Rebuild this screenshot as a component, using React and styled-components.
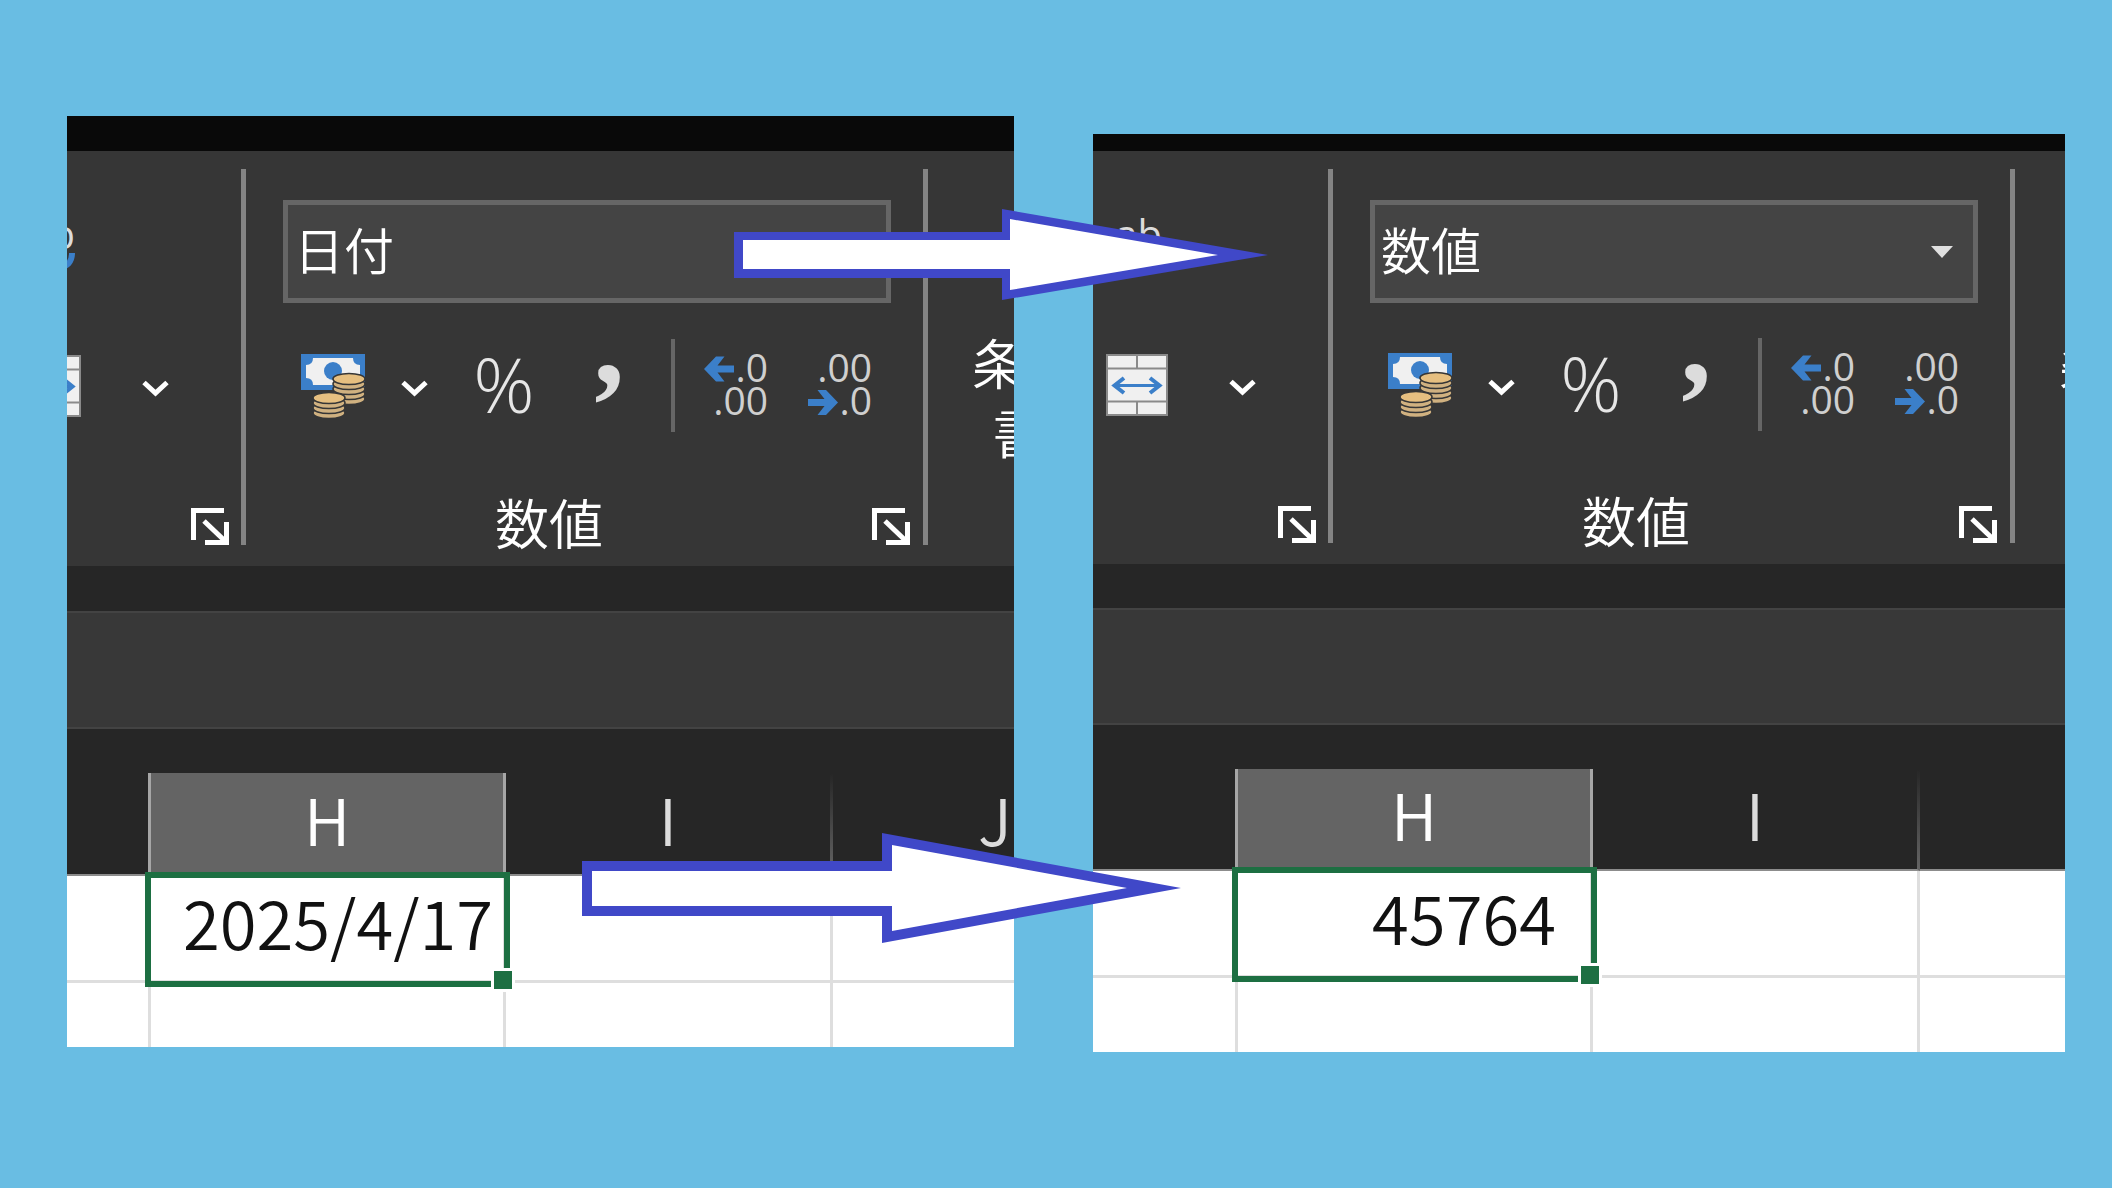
import React from 'react'
import styled, { createGlobalStyle } from 'styled-components'

const GlobalStyle = createGlobalStyle`
  * {
    box-sizing: border-box;
  }

  body {
    margin: 0;
    min-height: 100vh;
    background: #69bde3;
    font-family: 'Noto Sans CJK JP', 'Noto Sans', sans-serif;
    font-weight: 350;
  }
`

const Page = styled.main`
  display: grid;
  grid-template-columns: minmax(0, 947fr) minmax(0, 972fr);
  align-items: start;
  gap: 79px;
  min-height: 100vh;
  padding: 116px 47px 0 67px;
  overflow: hidden;
`

const Slot = styled.section`
  position: relative;
  z-index: ${props => (props.$raised ? 1 : 0)};
  margin-top: ${props => props.$drop}px;
`

const Window = styled.div`
  overflow: hidden;
  background: #262626;
`

const TitleStrip = styled.div`
  height: ${props => props.$height}px;
  background: #090909;
`

const Ribbon = styled.div`
  display: flex;
  height: ${props => props.$height}px;
  background: #363636;
  color: #fff;
`

const Divider = styled.div`
  flex: none;
  width: 5px;
  margin: 18px 0 21px;
  background: #848484;
`

const AlignGroup = styled.div`
  display: flex;
  flex: none;
  flex-direction: column;
  align-items: flex-end;
  justify-content: space-between;
  width: ${props => props.$width}px;
  padding: 49px 12px 14px 0;
`

const NumberGroup = styled.div`
  display: flex;
  flex: none;
  flex-direction: column;
  justify-content: space-between;
  width: 677px;
  padding: 49px 13px 14px 0;
`

const StyleGroup = styled.div`
  display: flex;
  flex: 1;
  min-width: 0;
  padding: 176px 0 0 44px;
  overflow: hidden;
`

const StyleButton = styled.button`
  display: flex;
  flex: none;
  flex-direction: column;
  align-items: center;
  padding: 0;
  border: 0;
  background: none;
  color: #fff;
  font: inherit;
  font-size: 54px;
  line-height: 69px;
  white-space: nowrap;

  span {
    display: flex;
    align-items: center;
    gap: 40px;
  }
`

const ToolButton = styled.button`
  display: flex;
  flex: none;
  align-items: center;
  justify-content: center;
  padding: 0;
  border: 0;
  background: none;
  color: #dcdcdc;

  svg {
    display: block;
  }
`

const LauncherButton = styled(ToolButton)`
  padding-bottom: 7px;
`

const WrapRow = styled.div`
  height: 103px;
  padding: 14px 153px 0 0;
`

const MergeRow = styled.div`
  display: flex;
  align-items: center;
  gap: 61px;
  height: 121px;
  padding: 0 60px 30px 0;
`

const FormatBox = styled.label`
  position: relative;
  display: block;
  margin: 0 19px 0 37px;

  svg {
    position: absolute;
    top: 46px;
    right: 25px;
    pointer-events: none;
  }
`

const FormatSelect = styled.select`
  display: block;
  width: 100%;
  height: 103px;
  padding: 0 6px 8px;
  appearance: none;
  border: 5px solid #666;
  border-radius: 0;
  background: #444;
  color: #fff;
  font: inherit;
  font-size: 50px;
`

const Tools = styled.div`
  display: flex;
  align-items: center;
  height: 121px;
  padding: 0 38px 30px 55px;
`

const MoneyTools = styled.div`
  display: flex;
  align-items: center;
  gap: 36px;
  margin-right: 45px;
`

const SignTools = styled.div`
  display: flex;
  align-items: center;
  gap: 61px;
  margin-right: 49px;
`

const DecimalTools = styled.div`
  display: flex;
  gap: 40px;
  margin-left: 29px;
`

const ToolDivider = styled.div`
  width: 5px;
  height: 93px;
  background: #666;
`

const Footer = styled.div`
  display: flex;
  align-items: flex-end;
  gap: 20px;
  height: 54px;
`

const GroupName = styled.span`
  flex: 1;
  padding-bottom: 3px;
  font-size: 54px;
  line-height: 54px;
  text-align: center;
`

const Gap = styled.div`
  height: ${props => props.$height}px;
`

const FormulaBar = styled.div`
  height: ${props => props.$height}px;
  border: solid #434343;
  border-width: 2px 0;
  background: #383838;
`

const Sheet = styled.table`
  width: 0;
  table-layout: fixed;
  border-spacing: 0;
  background: #fff;
`

const HeadCell = styled.th`
  height: ${props => props.$height}px;
  padding: 0 0 12px;
  border-right: 3px solid ${props => (props.$edge ? '#a6a6a6' : 'transparent')};
  border-bottom: 2px solid #8c8c8c;
  background: ${props => (props.$active ? '#646464' : 'linear-gradient(#262626, #666) right / 3px 100% no-repeat border-box, #262626')};
  color: ${props => (props.$active ? '#fff' : '#dcdcdc')};
  font-size: 64px;
  font-weight: 350;
  line-height: 64px;
`

const Cell = styled.td`
  height: ${props => props.$height}px;
  padding: 0 ${props => props.$indent || 0}px 14px 0;
  border-right: 3px solid #dedede;
  border-bottom: 3px solid #dedede;
  color: #111;
  font-size: 67px;
  line-height: 68px;
  text-align: right;
  white-space: nowrap;

  tr:last-child > & {
    border-bottom: 0;
  }
`

const ActiveCell = styled(Cell)`
  position: relative;
  z-index: 1;
`

const Selection = styled.div`
  position: absolute;
  inset: -4px -7px -7px -6px;
  border: 6px solid #1d6f42;

  &::after {
    content: '';
    position: absolute;
    right: -8px;
    bottom: -8px;
    width: 18px;
    height: 18px;
    background: #1d6f42;
    box-shadow: 0 0 0 3px #fff;
  }
`

const Pointer = styled.svg`
  position: absolute;
  z-index: 2;
  top: ${props => props.$top}px;
  right: ${props => -props.$reach}px;
`

const ChevronIcon = () => (
  <svg width="27" height="23" viewBox="0 -6 27 23" fill="none" stroke="#fff" strokeWidth="5">
    <path d="M2 2.5 13.5 13 25 2.5" />
  </svg>
)

const LauncherIcon = () => (
  <svg width="38" height="37" viewBox="0 0 38 37" fill="none" stroke="#fff" strokeWidth="5">
    <path d="M2.5 32V2.5H33M14 34.5H35.5V14M13 13 34 33" />
  </svg>
)

const WrapIcon = () => (
  <svg width="62" height="62" viewBox="0 0 62 62">
    <text x="61" y="35" fontSize="40" fontFamily="Open Sans" textAnchor="end" fill="#dcdcdc">ab</text>
    <path d="M58 39c0 9-5 14-13 14H34m8-8-8 8 8 8" fill="none" stroke="#3b7fc9" strokeWidth="6" />
  </svg>
)

const MergeIcon = () => (
  <svg width="62" height="62" viewBox="0 0 62 62" fill="none">
    <path d="M1 1H61V61H1Z" fill="#f0f0f0" stroke="#8a8a8a" strokeWidth="2" />
    <path d="M1 14.5H61M1 47.5H61M31 1V14.5M31 47.5V61" stroke="#8a8a8a" strokeWidth="2" />
    <path d="M9 31.5H53" stroke="#3b7fc9" strokeWidth="3" />
    <path d="M18 24 8.5 31.5 18 39M44 24 53.5 31.5 44 39" stroke="#3b7fc9" strokeWidth="4" />
  </svg>
)

const Coins = ({ x, y, layers }) => (
  <g transform={`translate(${x} ${y})`}>
    {Array.from({ length: layers }, (_, i) => layers - 1 - i).map(i => (
      <ellipse
        key={i}
        cy={i * 5}
        rx="16"
        ry="5.5"
        fill={i ? '#d0b180' : '#e6bf80'}
        stroke="#363636"
        strokeWidth="1.6"
      />
    ))}
  </g>
)

const MoneyIcon = () => (
  <svg width="64" height="64" viewBox="0 0 64 64">
    <path d="M0 0H64V36H0Z" fill="#3b7fc9" />
    <path d="M12 4H52Q52 11 59 11V24Q52 24 52 31H12Q12 24 5 24V11Q12 11 12 4Z" fill="#f0f0f0" />
    <circle cx="32" cy="17" r="9" fill="#3b7fc9" />
    <Coins x={48} y={25} layers={5} />
    <Coins x={28} y={44} layers={4} />
  </svg>
)

const PercentIcon = () => (
  <svg width="62" height="64" viewBox="0 0 62 64">
    <text x="31" y="59" fontSize="76" fontFamily="Open Sans" fontWeight="350" textAnchor="middle" fill="#e6e6e6">%</text>
  </svg>
)

const CommaIcon = () => (
  <svg width="26" height="64" viewBox="0 0 26 64">
    <text x="13" y="29" fontSize="124" fontFamily="Liberation Serif" fontWeight="700" textAnchor="middle" fill="currentColor">,</text>
  </svg>
)

const DecimalIcon = ({ top, bottom, children }) => (
  <svg width="64" height="64" viewBox="0 0 64 64">
    <g fontSize="39" fontFamily="Open Sans" fontWeight="400" textAnchor="end" fill="#cfcfcf">
      <text x="64" y="28">{top}</text>
      <text x="64" y="61">{bottom}</text>
    </g>
    <g fill="#3b7fc9">{children}</g>
  </svg>
)

const Launcher = () => (
  <LauncherButton aria-label="詳細設定">
    <LauncherIcon />
  </LauncherButton>
)

const formats = ['日付', '数値']

const ExcelWindow = ({ name, format, value, indent, title, ribbon, lead, gap, formula, head, last }) => (
  <Window>
    <TitleStrip $height={title} />
    <Ribbon $height={ribbon}>
      <AlignGroup $width={lead + 90}>
        <WrapRow>
          <ToolButton aria-label="折り返して全体を表示する"><WrapIcon /></ToolButton>
        </WrapRow>
        <MergeRow>
          <ToolButton aria-label="セルを結合して中央揃え"><MergeIcon /></ToolButton>
          <ToolButton aria-label="結合オプション"><ChevronIcon /></ToolButton>
        </MergeRow>
        <Footer><Launcher /></Footer>
      </AlignGroup>
      <Divider />
      <NumberGroup>
        <FormatBox>
          <FormatSelect aria-label="表示形式" name={name} defaultValue={format}>
            {formats.map(item => <option key={item}>{item}</option>)}
          </FormatSelect>
          <svg width="22" height="12" viewBox="0 0 22 12"><path d="M0 0H22L11 12Z" fill="#e0e0e0" /></svg>
        </FormatBox>
        <Tools>
          <MoneyTools>
            <ToolButton aria-label="通貨表示形式"><MoneyIcon /></ToolButton>
            <ToolButton aria-label="通貨の選択"><ChevronIcon /></ToolButton>
          </MoneyTools>
          <SignTools>
            <ToolButton aria-label="パーセント スタイル"><PercentIcon /></ToolButton>
            <ToolButton aria-label="桁区切りスタイル"><CommaIcon /></ToolButton>
          </SignTools>
          <ToolDivider />
          <DecimalTools>
            <ToolButton aria-label="小数点以下の表示桁数を増やす">
              <DecimalIcon top=".0" bottom=".00">
                <path d="M0 15 12 2.5H20.5L13.5 11.5H30V18.5H13.5L20.5 27.5H12Z" />
              </DecimalIcon>
            </ToolButton>
            <ToolButton aria-label="小数点以下の表示桁数を減らす">
              <DecimalIcon top=".00" bottom=".0">
                <path d="M30 48.5 18 36H9.5L16.5 45H0V52H16.5L9.5 61H18Z" />
              </DecimalIcon>
            </ToolButton>
          </DecimalTools>
        </Tools>
        <Footer>
          <GroupName>数値</GroupName>
          <Launcher />
        </Footer>
      </NumberGroup>
      <Divider />
      <StyleGroup>
        <StyleButton>
          条件付き
          <span>書式 <ChevronIcon /></span>
        </StyleButton>
      </StyleGroup>
    </Ribbon>
    <Gap $height={gap} />
    <FormulaBar $height={formula} />
    <Gap $height={44} />
    <Sheet>
      <colgroup>
        <col width={lead} />
        <col width="355" />
        <col width="327" />
        <col width="327" />
      </colgroup>
      <thead>
        <tr>
          <HeadCell $height={head} $edge />
          <HeadCell $height={head} $edge $active>H</HeadCell>
          <HeadCell $height={head}>I</HeadCell>
          <HeadCell $height={head}>J</HeadCell>
        </tr>
      </thead>
      <tbody>
        <tr>
          <Cell $height={107} />
          <ActiveCell $height={107} $indent={indent}>
            {value}
            <Selection />
          </ActiveCell>
          <Cell $height={107} />
          <Cell $height={107} />
        </tr>
        <tr>
          <Cell $height={last} />
          <Cell $height={last} />
          <Cell $height={last} />
          <Cell $height={last} />
        </tr>
      </tbody>
    </Sheet>
  </Window>
)

const App = () => {
  return (
    <>
      <GlobalStyle />
      <Page>
        <Slot $raised $drop={0}>
          <ExcelWindow
            name="before"
            format="日付"
            value="2025/4/17"
            indent={10}
            title={35}
            ribbon={415}
            lead={84}
            gap={45}
            formula={118}
            head={103}
            last={64}
          />
          <Pointer $top={93} $reach={254} width="534" height="92" viewBox="0 0 534 92">
            <path d="M0 23H268V0L534 46 268 91V69H0Z" fill="#4048c8" />
            <path d="M9 31H276V10L484 46 276 81V60H9Z" fill="#fff" />
          </Pointer>
          <Pointer $top={717} $reach={167} width="599" height="110" viewBox="0 0 599 110">
            <path d="M0 28H300V0L599 55 300 110V83H0Z" fill="#4048c8" />
            <path d="M10 38H310V12L545 55 310 98V73H10Z" fill="#fff" />
          </Pointer>
        </Slot>
        <Slot $drop={18}>
          <ExcelWindow
            name="after"
            format="数値"
            value="45764"
            indent={34}
            title={17}
            ribbon={413}
            lead={145}
            gap={44}
            formula={117}
            head={102}
            last={74}
          />
        </Slot>
      </Page>
    </>
  )
}

export default App
